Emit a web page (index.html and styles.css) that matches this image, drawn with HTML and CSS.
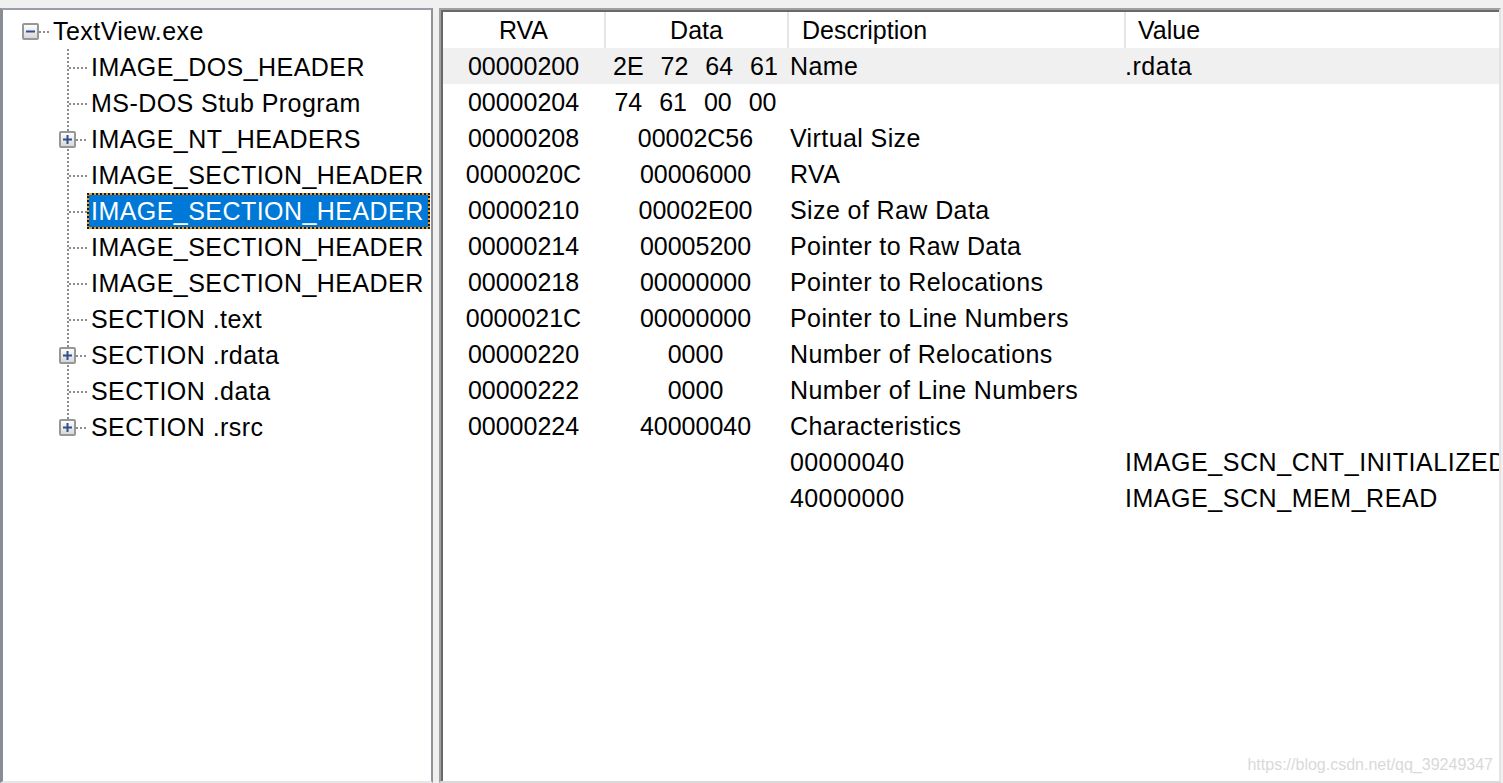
FILE: index.html
```html
<!DOCTYPE html>
<html lang="en">
<head>
    <meta charset="UTF-8">
    <title>PE Viewer - TextView.exe</title>
    <link rel="stylesheet" href="styles.css">
</head>
<body>
    <div class="window">
        <div class="tree-pane">
            <div class="tree">
                <div class="row">
                    <div class="gutter root-gutter">
                        <svg class="toggle" width="17" height="17" viewBox="0 0 17 17">
                            <defs>
                                <linearGradient id="boxfill" x1="0" y1="0" x2="0" y2="1">
                                    <stop offset="0" stop-color="#ffffff"/>
                                    <stop offset="1" stop-color="#d6d6d6"/>
                                </linearGradient>
                            </defs>
                            <rect x="1" y="1" width="15" height="15" rx="1" fill="url(#boxfill)" stroke="#979797" stroke-width="2"/>
                            <path d="M4 8.5h9" stroke="#2f4f8f" stroke-width="2"/>
                        </svg>
                        <span class="hline"></span>
                    </div>
                    <span class="label">TextView.exe</span>
                </div>
                <div class="row">
                    <div class="gutter"><span class="stem"></span><span class="hline"></span></div>
                    <span class="label">IMAGE_DOS_HEADER</span>
                </div>
                <div class="row">
                    <div class="gutter"><span class="stem"></span><span class="hline"></span></div>
                    <span class="label">MS-DOS Stub Program</span>
                </div>
                <div class="row">
                    <div class="gutter">
                        <span class="stem"></span>
                        <svg class="toggle child-toggle" width="17" height="17" viewBox="0 0 17 17">
                            <rect x="1" y="1" width="15" height="15" rx="1" fill="url(#boxfill)" stroke="#979797" stroke-width="2"/>
                            <path d="M4 8.5h9M8.5 4v9" stroke="#2f4f8f" stroke-width="2"/>
                        </svg>
                        <span class="hline"></span>
                    </div>
                    <span class="label">IMAGE_NT_HEADERS</span>
                </div>
                <div class="row">
                    <div class="gutter"><span class="stem"></span><span class="hline"></span></div>
                    <span class="label">IMAGE_SECTION_HEADER</span>
                </div>
                <div class="row">
                    <div class="gutter"><span class="stem"></span><span class="hline"></span></div>
                    <span class="label selected">IMAGE_SECTION_HEADER</span>
                </div>
                <div class="row">
                    <div class="gutter"><span class="stem"></span><span class="hline"></span></div>
                    <span class="label">IMAGE_SECTION_HEADER</span>
                </div>
                <div class="row">
                    <div class="gutter"><span class="stem"></span><span class="hline"></span></div>
                    <span class="label">IMAGE_SECTION_HEADER</span>
                </div>
                <div class="row">
                    <div class="gutter"><span class="stem"></span><span class="hline"></span></div>
                    <span class="label">SECTION .text</span>
                </div>
                <div class="row">
                    <div class="gutter">
                        <span class="stem"></span>
                        <svg class="toggle child-toggle" width="17" height="17" viewBox="0 0 17 17">
                            <rect x="1" y="1" width="15" height="15" rx="1" fill="url(#boxfill)" stroke="#979797" stroke-width="2"/>
                            <path d="M4 8.5h9M8.5 4v9" stroke="#2f4f8f" stroke-width="2"/>
                        </svg>
                        <span class="hline"></span>
                    </div>
                    <span class="label">SECTION .rdata</span>
                </div>
                <div class="row">
                    <div class="gutter"><span class="stem"></span><span class="hline"></span></div>
                    <span class="label">SECTION .data</span>
                </div>
                <div class="row">
                    <div class="gutter">
                        <span class="stem last"></span>
                        <svg class="toggle child-toggle" width="17" height="17" viewBox="0 0 17 17">
                            <rect x="1" y="1" width="15" height="15" rx="1" fill="url(#boxfill)" stroke="#979797" stroke-width="2"/>
                            <path d="M4 8.5h9M8.5 4v9" stroke="#2f4f8f" stroke-width="2"/>
                        </svg>
                        <span class="hline"></span>
                    </div>
                    <span class="label">SECTION .rsrc</span>
                </div>
            </div>
        </div>

        <div class="list-pane">
            <div class="list">
                <div class="cols head">
                    <div class="cell rva">RVA</div>
                    <div class="cell data">Data</div>
                    <div class="cell desc">Description</div>
                    <div class="cell val">Value</div>
                </div>
                <div class="cols item hot">
                    <div class="cell rva">00000200</div>
                    <div class="cell data bytes">2E 72 64 61</div>
                    <div class="cell desc">Name</div>
                    <div class="cell val">.rdata</div>
                </div>
                <div class="cols item">
                    <div class="cell rva">00000204</div>
                    <div class="cell data bytes">74 61 00 00</div>
                    <div class="cell desc"></div>
                    <div class="cell val"></div>
                </div>
                <div class="cols item">
                    <div class="cell rva">00000208</div>
                    <div class="cell data">00002C56</div>
                    <div class="cell desc">Virtual Size</div>
                    <div class="cell val"></div>
                </div>
                <div class="cols item">
                    <div class="cell rva">0000020C</div>
                    <div class="cell data">00006000</div>
                    <div class="cell desc">RVA</div>
                    <div class="cell val"></div>
                </div>
                <div class="cols item">
                    <div class="cell rva">00000210</div>
                    <div class="cell data">00002E00</div>
                    <div class="cell desc">Size of Raw Data</div>
                    <div class="cell val"></div>
                </div>
                <div class="cols item">
                    <div class="cell rva">00000214</div>
                    <div class="cell data">00005200</div>
                    <div class="cell desc">Pointer to Raw Data</div>
                    <div class="cell val"></div>
                </div>
                <div class="cols item">
                    <div class="cell rva">00000218</div>
                    <div class="cell data">00000000</div>
                    <div class="cell desc">Pointer to Relocations</div>
                    <div class="cell val"></div>
                </div>
                <div class="cols item">
                    <div class="cell rva">0000021C</div>
                    <div class="cell data">00000000</div>
                    <div class="cell desc">Pointer to Line Numbers</div>
                    <div class="cell val"></div>
                </div>
                <div class="cols item">
                    <div class="cell rva">00000220</div>
                    <div class="cell data">0000</div>
                    <div class="cell desc">Number of Relocations</div>
                    <div class="cell val"></div>
                </div>
                <div class="cols item">
                    <div class="cell rva">00000222</div>
                    <div class="cell data">0000</div>
                    <div class="cell desc">Number of Line Numbers</div>
                    <div class="cell val"></div>
                </div>
                <div class="cols item">
                    <div class="cell rva">00000224</div>
                    <div class="cell data">40000040</div>
                    <div class="cell desc">Characteristics</div>
                    <div class="cell val"></div>
                </div>
                <div class="cols item">
                    <div class="cell rva"></div>
                    <div class="cell data"></div>
                    <div class="cell desc">00000040</div>
                    <div class="cell val">IMAGE_SCN_CNT_INITIALIZED_DATA</div>
                </div>
                <div class="cols item">
                    <div class="cell rva"></div>
                    <div class="cell data"></div>
                    <div class="cell desc">40000000</div>
                    <div class="cell val">IMAGE_SCN_MEM_READ</div>
                </div>
            </div>
        </div>
    </div>
    <div class="watermark">https://blog.csdn.net/qq_39249347</div>
</body>
</html>
```

FILE: styles.css
```css
* {
    box-sizing: border-box;
}

body {
    margin: 0;
    height: 783px;
    overflow: hidden;
    background-color: #f0f0f0;
    font-family: "Liberation Sans", Arial, sans-serif;
    font-size: 25px;
    color: #000;
}

.window {
    display: flex;
    gap: 6px;
    padding: 8px 2px 0 0;
    height: 783px;
}

/* left tree view */
.tree-pane {
    width: 433px;
    flex: none;
    background-color: #fff;
    border-top: 2px solid #9a9ea6;
    border-left: 3px solid #888c93;
    border-right: 2px solid #8e939b;
    border-bottom: 2px solid #e6e6e6;
    overflow: hidden;
}

.tree {
    padding-top: 3px;
}

.row {
    display: flex;
    align-items: center;
    height: 36px;
    white-space: nowrap;
}

.gutter {
    display: flex;
    align-items: center;
    align-self: stretch;
    width: 84px;
    flex: none;
}

.root-gutter {
    width: 46px;
    padding-left: 19px;
}

.stem {
    width: 2px;
    align-self: stretch;
    margin-left: 64px;
    flex: none;
    background: linear-gradient(to bottom, #8c8c8c 50%, transparent 50%) 0 0 / 2px 4px repeat-y;
}

.stem.last {
    align-self: flex-start;
    height: 18px;
}

.hline {
    flex: 1;
    height: 2px;
    margin-top: 2px;
    background: linear-gradient(to right, #8c8c8c 50%, transparent 50%) 0 0 / 4px 2px repeat-x;
}

.toggle {
    flex: none;
    display: block;
}

.child-toggle {
    margin-left: -10px;
}

.label {
    display: block;
    height: 36px;
    line-height: 32px;
    padding: 0 4px 0 2px;
    border: 2px solid transparent;
    letter-spacing: 0.45px;
}

.label.selected {
    color: #fff;
    border: 2px dotted #1a1a1a;
    background: linear-gradient(#0078d7, #0078d7) padding-box, #f39a1e;
}

/* right list view */
.list-pane {
    flex: 1;
    border-top: 2px solid #a0a0a0;
    border-left: 2px solid #a0a0a0;
    border-right: 2px solid #e3e3e3;
    border-bottom: 2px solid #d9d9d9;
    overflow: hidden;
}

.list {
    height: 100%;
    background-color: #fff;
    border-top: 2px solid #696969;
    border-left: 2px solid #696969;
}

.cols {
    display: grid;
    grid-template-columns: 161px 183px 337px 1fr;
    height: 36px;
    line-height: 36px;
}

.cell {
    white-space: nowrap;
    overflow: hidden;
}

.head .data,
.head .desc,
.head .val {
    border-left: 2px solid #e5e5e5;
}

.head .desc {
    padding-left: 13px;
}

.head .val {
    padding-left: 12px;
}

.rva,
.data {
    text-align: center;
}

.item .desc {
    padding-left: 3px;
    letter-spacing: 0.4px;
}

.item .val {
    padding-left: 1px;
    letter-spacing: 0.55px;
}

.bytes {
    word-spacing: 10px;
}

.item.hot {
    background-color: #f0f0f0;
}

.watermark {
    position: absolute;
    right: 10px;
    bottom: 9px;
    font-size: 16px;
    color: #d9d9d9;
}
```
